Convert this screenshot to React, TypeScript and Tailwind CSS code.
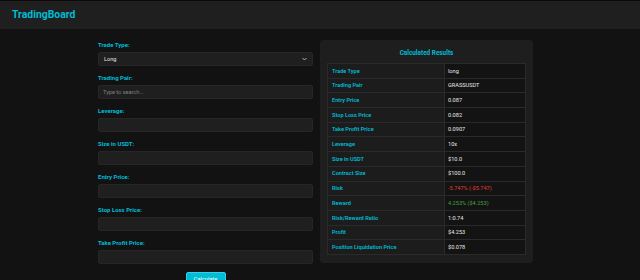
const fields = [
  "Leverage:",
  "Size in USDT:",
  "Entry Price:",
  "Stop Loss Price:",
  "Take Profit Price:",
];

const results: { label: string; value: string; color?: string }[] = [
  { label: "Trade Type", value: "long" },
  { label: "Trading Pair", value: "GRASSUSDT" },
  { label: "Entry Price", value: "0.087" },
  { label: "Stop Loss Price", value: "0.082" },
  { label: "Take Profit Price", value: "0.0907" },
  { label: "Leverage", value: "10x" },
  { label: "Size in USDT", value: "$10.0" },
  { label: "Contract Size", value: "$100.0" },
  { label: "Risk", value: "-5.747% (-$5.747)", color: "text-[#e53935]" },
  { label: "Reward", value: "4.253% ($4.253)", color: "text-[#43a047]" },
  { label: "Risk/Reward Ratio", value: "1:0.74" },
  { label: "Profit", value: "$4.253" },
  { label: "Position Liquidation Price", value: "$0.078" },
];

function Label({ children }: { children: React.ReactNode }) {
  return (
    <label className="block text-[6px] leading-[8px] font-bold text-[#00bcd4] mb-[3px]">
      {children}
    </label>
  );
}

export default function App() {
  return (
    <div
      className="min-h-[340px] bg-[#121212] text-[#e0e0e0]"
      style={{ fontFamily: "Roboto, 'Liberation Sans', sans-serif" }}
    >
      <header className="h-[29px] bg-[#1f1f1f] border-t border-[#0b0b0b] flex items-center px-[12px]">
        <h1 className="text-[10.4px] font-bold text-[#00bcd4]">TradingBoard</h1>
      </header>

      <main className="flex gap-[7px] ml-[98px] mt-[11px] w-[435px] pb-[40px]">
        {/* form */}
        <div className="w-[215px] pt-[1px]">
          <div className="mb-[8px]">
            <Label>Trade Type:</Label>
            <div className="h-[14px] rounded-[2px] bg-[#1f1f1f] border border-[#262626] flex items-center justify-between px-[5px]">
              <span className="text-[5.6px] text-[#e6e6e6]">Long</span>
              <svg width="5" height="4" viewBox="0 0 10 6" fill="none">
                <path d="M1 1l4 4 4-4" stroke="#d0d0d0" strokeWidth="1.6" />
              </svg>
            </div>
          </div>
          <div className="mb-[8px]">
            <Label>Trading Pair:</Label>
            <div className="h-[14px] rounded-[2px] bg-[#1f1f1f] border border-[#262626] flex items-center px-[4px]">
              <span className="text-[5.6px] text-[#808080]">Type to search...</span>
            </div>
          </div>
          {fields.map((f) => (
            <div key={f} className="mb-[8px]">
              <Label>{f}</Label>
              <div className="h-[14px] rounded-[2px] bg-[#1f1f1f] border border-[#262626]" />
            </div>
          ))}
          <div className="flex justify-center">
            <button className="w-[40px] h-[14px] rounded-[2px] bg-[#00bcd4] text-white text-[5.6px] border border-[#33d0e6]">
              Calculate
            </button>
          </div>
        </div>

        {/* results */}
        <div className="w-[213px] self-start bg-[#1e1e1e] rounded-[4px] px-[7px] pt-[9px] pb-[8px]">
          <h2 className="text-center text-[6.4px] leading-[8px] font-bold text-[#00bcd4] mb-[6px]">
            Calculated Results
          </h2>
          <table className="w-full border-collapse">
            <tbody>
              {results.map((r) => (
                <tr key={r.label}>
                  <td className="w-[117px] h-[14.7px] border border-[#2a2a2a] bg-[#1c1c1c] pl-[4px] text-[5.6px] font-semibold text-[#00bcd4]">
                    {r.label}
                  </td>
                  <td
                    className={`h-[14.7px] border border-[#2a2a2a] bg-[#131313] pl-[3px] text-[5.6px] ${
                      r.color ?? "text-[#e6e6e6]"
                    }`}
                  >
                    {r.value}
                  </td>
                </tr>
              ))}
            </tbody>
          </table>
        </div>
      </main>
    </div>
  );
}
